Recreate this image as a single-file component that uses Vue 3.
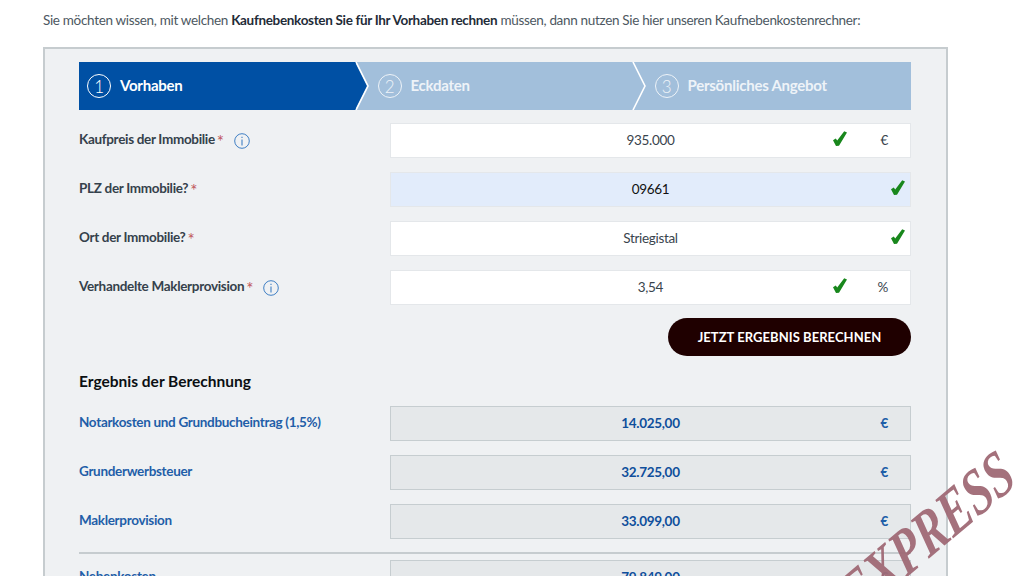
<script setup>
const inputs = [
  { label: 'Kaufpreis der Immobilie', info: true, value: '935.000', unit: '€' },
  { label: 'PLZ der Immobilie?', value: '09661', focus: true },
  { label: 'Ort der Immobilie?', value: 'Striegistal' },
  { label: 'Verhandelte Maklerprovision', info: true, value: '3,54', unit: '%' },
]
const results = [
  { label: 'Notarkosten und Grundbucheintrag (1,5%)', value: '14.025,00' },
  { label: 'Grunderwerbsteuer', value: '32.725,00' },
  { label: 'Maklerprovision', value: '33.099,00' },
]
</script>

<template>
  <div class="page">
    <p class="intro">Sie möchten wissen, mit welchen <b>Kaufnebenkosten Sie für Ihr Vorhaben rechnen</b> müssen, dann nutzen Sie hier unseren Kaufnebenkostenrechner:</p>
    <section class="panel">
      <div class="steps">
        <div class="step active"><span class="num">1</span>Vorhaben</div>
        <div class="step"><span class="num">2</span>Eckdaten</div>
        <div class="step"><span class="num">3</span>Persönliches Angebot</div>
        <svg class="chev c1" width="14" height="48" viewBox="0 0 14 48"><path d="M0 0 L12 24 L0 48 Z" fill="#0050a4"/><path d="M1 0 L13 24 L1 48" fill="none" stroke="#fff" stroke-width="1.6"/></svg>
        <svg class="chev c2" width="14" height="48" viewBox="0 0 14 48"><path d="M1 0 L13 24 L1 48" fill="none" stroke="#fff" stroke-width="1.6"/></svg>
      </div>
      <div class="row" v-for="r in inputs" :key="r.label">
        <div class="label">{{ r.label }}<span class="req">*</span>
          <svg v-if="r.info" class="info" width="16" height="16" viewBox="0 0 16 16"><circle cx="8" cy="8" r="7.3" fill="none" stroke="#3f7fc4" stroke-width="1"/><path d="M8 3.8v1.2M8 6.6v5.8" stroke="#3f7fc4" stroke-width="1.1"/></svg>
        </div>
        <div class="field" :class="{ focus: r.focus }">
          <span class="val">{{ r.value }}</span>
          <svg class="check" :class="{ shifted: r.unit }" width="14" height="15" viewBox="0 0 14 15"><path d="M0 9.2 L2.8 7.4 L4.2 9.4 L11.2 0.2 L14 1.4 L6 14.8 L3 15 Z" fill="#18871c"/></svg>
          <span v-if="r.unit" class="unit">{{ r.unit }}</span>
        </div>
      </div>
      <div class="actions"><button class="calc">JETZT ERGEBNIS BERECHNEN</button></div>
      <h3 class="result-title">Ergebnis der Berechnung</h3>
      <div class="row result" v-for="r in results" :key="r.label">
        <div class="label">{{ r.label }}</div>
        <div class="field out"><span class="val">{{ r.value }}</span><span class="unit">€</span></div>
      </div>
      <hr class="sep" />
      <div class="row result">
        <div class="label">Nebenkosten</div>
        <div class="field out"><span class="val">79.849,00</span><span class="unit">€</span></div>
      </div>
    </section>
    <div class="stamp">EXPRESS</div>
  </div>
</template>

<style>
html, body { margin: 0; overflow: hidden; background: #fff; }
</style>

<style scoped>
.page {
  position: relative;
  height: 576px;
  overflow: hidden;
  font-family: Lato, "Liberation Sans", sans-serif;
  font-size: 13.5px;
  letter-spacing: -0.32px;
  color: #2f3b45;
  padding: 0 76px 0 43px;
  box-sizing: border-box;
}
.intro { margin: 0; height: 47px; padding-top: 11px; box-sizing: border-box; line-height: 18px; color: #4d5861; white-space: nowrap; }
.intro b { color: #1f2c38; font-weight: 700; }
.panel {
  background: #eff1f3;
  border: 2px solid #c6cccf;
  border-bottom: 0;
  padding: 13px 35px 0 34px;
  height: 600px;
  box-sizing: border-box;
}
.steps {
  position: relative;
  display: grid;
  grid-template-columns: 277px 277px 278px;
  height: 48px;
  background: #a2bfdb;
  margin-bottom: 13px;
}
.step {
  display: flex;
  align-items: center;
  gap: 9px;
  padding-left: 21.5px;
  color: #eef3f8;
  font-size: 15px;
  letter-spacing: -0.25px;
  font-weight: 700;
  padding-bottom: 2px;
  box-sizing: border-box;
}
.step.active { background: #0050a4; color: #fff; padding-left: 8px; }
.step .num {
  width: 24px; height: 24px; box-sizing: border-box; border: 1px solid currentColor; border-radius: 50%;
  display: flex; align-items: center; justify-content: center;
  font-size: 17px; font-weight: 300; margin-top: 2px;
}
.chev { position: absolute; top: 0; }
.c1 { left: 276px; }
.c2 { left: 553px; }
.row { display: grid; grid-template-columns: 311px 521px; height: 35px; margin-bottom: 14px; align-items: center; }
.label { font-weight: 700; color: #35414b; display: flex; align-items: center; margin-top: -3px; white-space: pre; }
.req { color: #c0565b; font-weight: 400; font-size: 17px; margin-left: 2px; margin-top: 5px; line-height: 16px; }
.info { margin-left: 10px; margin-top: 4px; }
.field {
  position: relative;
  height: 35px;
  box-sizing: border-box;
  background: #fff;
  border: 1px solid #e4e7ea;
  display: flex;
  align-items: center;
  justify-content: center;
  color: #39444d;
}
.val { margin-top: -2px; }
.field.focus { background: #e2ecfb; color: #111; }
.check { position: absolute; right: 5px; top: 7px; }
.check.shifted { right: 63px; }
.unit { position: absolute; right: 22px; top: 8px; }
.actions { display: flex; justify-content: flex-end; margin-top: -1px; }
.calc {
  width: 243px; height: 38px; border: 0; border-radius: 19px;
  background: #1f0000; color: #fff;
  font: 700 13px Lato, sans-serif; letter-spacing: .05px; cursor: pointer; padding: 0;
}
.result-title { margin: 16px 0 16px; font-size: 15.5px; letter-spacing: 0; line-height: 18px; font-weight: 700; color: #0b0f12; }
.result .label { color: #1f5ea8; }
.field.out { background: #e5e8ea; border: 1px solid #c6cdd0; color: #0f4f9c; font-weight: 700; }
.field.out .unit { font-weight: 700; color: #1f5ea8; }
.sep { border: 0; border-top: 2px solid #c6cccf; margin: -1px 0 6px; }
.stamp {
  position: absolute;
  left: 846px; top: 577px;
  font: italic 700 48px "Liberation Serif", serif;
  color: #a06a76;
  letter-spacing: 0;
  transform: rotate(-40deg) skewX(-8deg) scaleY(1.3);
  transform-origin: left center;
  opacity: .95;
  line-height: 1;
}
</style>
